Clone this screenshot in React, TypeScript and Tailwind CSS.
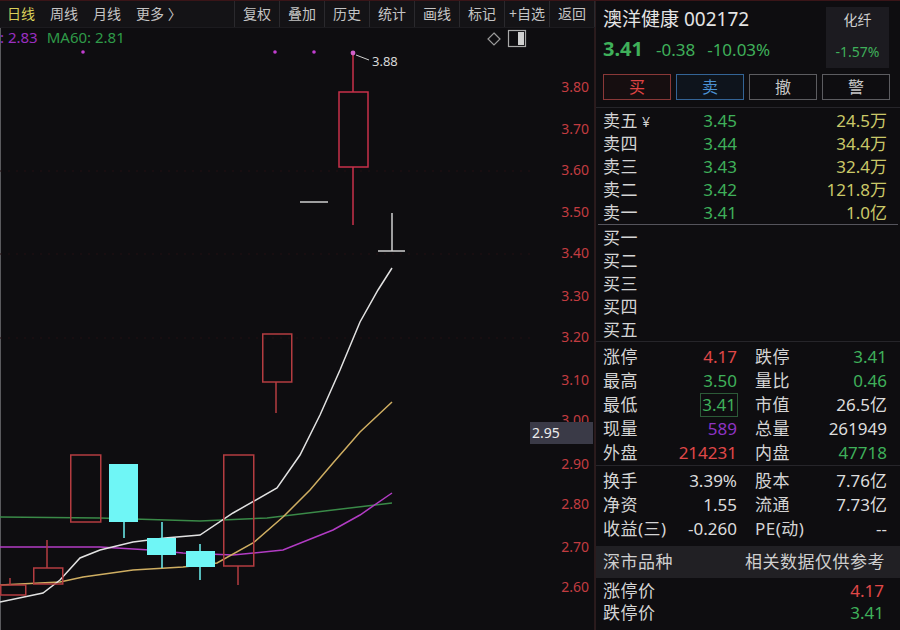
import React from 'react';

const FONT = "font-['Noto_Sans','Noto_Sans_CJK_SC',sans-serif]";

const RED = 'text-[#e04848]';
const GREEN = 'text-[#3fb05a]';
const WHITE = 'text-[#dcdcdc]';
const PURPLE = 'text-[#8e34c4]';

const leftTabs = [
  { t: '日线', c: 'text-[#d8cf5a]' },
  { t: '周线', c: 'text-[#c4c4c4]' },
  { t: '月线', c: 'text-[#c4c4c4]' },
  { t: '更多 〉', c: 'text-[#c4c4c4]' },
];

const rightTabs = ['复权', '叠加', '历史', '统计', '画线', '标记', '+自选', '返回'];

const sells = [
  ['卖五', '3.45', '24.5万'],
  ['卖四', '3.44', '34.4万'],
  ['卖三', '3.43', '32.4万'],
  ['卖二', '3.42', '121.8万'],
  ['卖一', '3.41', '1.0亿'],
];

const buys = ['买一', '买二', '买三', '买四', '买五'];

type StatRow = [string, string, string, string, string, string];

const stats1: StatRow[] = [
  ['涨停', '4.17', RED, '跌停', '3.41', GREEN],
  ['最高', '3.50', GREEN, '量比', '0.46', GREEN],
  ['最低', '3.41', GREEN, '市值', '26.5亿', WHITE],
  ['现量', '589', PURPLE, '总量', '261949', WHITE],
  ['外盘', '214231', RED, '内盘', '47718', GREEN],
];

const stats2: StatRow[] = [
  ['换手', '3.39%', WHITE, '股本', '7.76亿', WHITE],
  ['净资', '1.55', WHITE, '流通', '7.73亿', WHITE],
  ['收益(三)', '-0.260', WHITE, 'PE(动)', '--', WHITE],
];

// candles in page coordinates
const hollow = [
  { x: 0, y: 585, w: 25, h: 10, wick: [10, 578, 585] },
  { x: 33, y: 568, w: 29, h: 16, wick: [47, 540, 568] },
  { x: 70, y: 455, w: 30, h: 67, wick: null },
  { x: 223, y: 455, w: 30, h: 111, wick: [238, 566, 585] },
  { x: 262, y: 334, w: 29, h: 48, wick: [276, 382, 413] },
];

const cyan = [
  { x: 109, y: 464, w: 29, h: 58, wicks: [[124, 522, 538]] },
  { x: 147, y: 538, w: 29, h: 17, wicks: [[162, 522, 538], [162, 555, 568]] },
  { x: 186, y: 551, w: 29, h: 16, wicks: [[200, 544, 551], [200, 567, 580]] },
];

const ma5 = '0,602 43,593 60,580 80,558 100,550 133,542 165,538 200,535 233,513 277,488 300,455 320,415 340,370 360,322 378,290 392,268';
const ma10 = '0,585 60,582 83,577 133,570 183,567 217,563 253,543 283,517 310,490 333,463 360,432 392,402';
const ma20 = '0,547 100,547 150,550 183,553 233,555 283,550 333,530 360,515 392,493';
const ma60 = '0,517 100,518 200,521 267,518 333,510 392,503';

const axis = [
  ['3.80', 88], ['3.70', 130], ['3.60', 171], ['3.50', 213], ['3.40', 254], ['3.30', 297],
  ['3.20', 338], ['3.10', 381], ['3.00', 421], ['2.90', 465], ['2.80', 505], ['2.70', 548], ['2.60', 588],
] as const;

const Chart = () => (
  <svg className="absolute inset-0" width={595} height={602} viewBox="0 28 595 602">
    <line x1={0.5} y1={28} x2={0.5} y2={630} stroke="#5a5a5e" strokeWidth={1} />
    <line x1={594.5} y1={28} x2={594.5} y2={630} stroke="#2a1a1c" strokeWidth={1} />
    {[171, 254, 338].map((y) => (
      <line key={y} x1={0} y1={y} x2={530} y2={y} stroke="#221113" strokeDasharray="2 6" />
    ))}

    {/* moving averages */}
    <polyline points={ma60} fill="none" stroke="#3a8a48" strokeWidth={1.5} />
    <polyline points={ma20} fill="none" stroke="#b23cc4" strokeWidth={1.5} />
    <polyline points={ma10} fill="none" stroke="#cfae62" strokeWidth={1.5} />
    <polyline points={ma5} fill="none" stroke="#e2e2e2" strokeWidth={1.5} />

    {hollow.map((c, i) => (
      <g key={i} stroke="#b43c40" strokeWidth={1.5} fill="none">
        <rect x={c.x + 0.75} y={c.y} width={c.w} height={c.h} />
        {c.wick && <line x1={c.wick[0]} y1={c.wick[1]} x2={c.wick[0]} y2={c.wick[2]} />}
      </g>
    ))}
    {cyan.map((c, i) => (
      <g key={i}>
        {c.wicks.map((w, j) => (
          <line key={j} x1={w[0]} y1={w[1]} x2={w[0]} y2={w[2]} stroke="#6ef2f2" strokeWidth={1.5} />
        ))}
        <rect x={c.x} y={c.y} width={c.w} height={c.h} fill="#6ff6f6" />
      </g>
    ))}

    {/* limit-down day */}
    <g stroke="#c8304a" strokeWidth={1.5} fill="none">
      <line x1={353} y1={52} x2={353} y2={92} />
      <rect x={339} y={92} width={29} height={75} />
      <line x1={353} y1={167} x2={353} y2={225} />
    </g>
    <line x1={300} y1={202} x2={328} y2={202} stroke="#cfcfcf" strokeWidth={1.5} />
    <g stroke="#cfcfcf" strokeWidth={1.5}>
      <line x1={392} y1={213} x2={392} y2={251} />
      <line x1={378} y1={251} x2={405} y2={251} />
    </g>

    {[83, 275, 314].map((x) => (
      <circle key={x} cx={x} cy={52} r={1.8} fill="#c23ed0" />
    ))}
    <circle cx={353} cy={53} r={2.4} fill="#d060c8" />
    <line x1={356} y1={55} x2={369} y2={60} stroke="#cfcfcf" strokeWidth={1} />
    <text x={372} y={63} fontSize={13} fill="#d8d8d8" dominantBaseline="middle">3.88</text>

    {/* top right icons */}
    <path d="M494 33 L500 39 L494 45 L488 39 Z" fill="none" stroke="#9a9a9a" strokeWidth={1.2} />
    <rect x={508.5} y={30.5} width={17} height={16} fill="none" stroke="#a8a8a8" strokeWidth={1.2} />
    <rect x={518} y={32} width={6} height={13} fill="#d0d0d0" />

    {axis.map(([t, y]) => (
      <text key={t} x={589} y={y} fontSize={14} fill="#c23c40" textAnchor="end" dominantBaseline="middle">
        {t}
      </text>
    ))}
    <rect x={530} y={422} width={63} height={22} fill="#3a3a47" />
    <text x={532} y={434} fontSize={14} fill="#ececec" dominantBaseline="middle">2.95</text>
  </svg>
);

const StatRows = ({ rows }: { rows: StatRow[] }) => (
  <div className="flex flex-col">
    {rows.map((r) => (
      <div key={r[0]} className="h-[24px] flex items-center text-[17px] leading-[24px]">
        <div className="w-[134px] flex justify-between">
          <span className="text-[#d4d4d4] tracking-[0.5px]">{r[0]}</span>
          {r[0] === '最低' ? (
            <span className={`${r[2]} border border-[#2c5a38] px-[1px] leading-[21px] -mr-[1px]`}>{r[1]}</span>
          ) : (
            <span className={r[2]}>{r[1]}</span>
          )}
        </div>
        <div className="w-[132px] ml-[18px] flex justify-between">
          <span className="text-[#d4d4d4] tracking-[0.5px]">{r[3]}</span>
          <span className={r[5]}>{r[4]}</span>
        </div>
      </div>
    ))}
  </div>
);

export default function App() {
  return (
    <div className={`w-[900px] h-[630px] flex bg-[#0e0d10] border-t border-[#3a1518] overflow-hidden ${FONT}`}>
      {/* left: toolbar + chart */}
      <div className="w-[595px] flex flex-col">
        <div className="h-[27px] flex bg-[#141316] border-b border-[#1c1b1f] text-[14px] leading-[26px]">
          <div className="w-[235px] flex gap-[15px] pl-[7px] border-r border-[#2a292d]">
            {leftTabs.map((t) => (
              <span key={t.t} className={t.c}>{t.t}</span>
            ))}
          </div>
          {rightTabs.map((t) => (
            <div key={t} className="flex-1 text-center text-[#c4c4c4] border-r border-[#2a292d]">
              {t}
            </div>
          ))}
        </div>
        <div className="relative flex-1">
          <Chart />
          <div className="relative flex gap-[9px] text-[15px] leading-[18px]">
            <span className="text-[#9a2fc0]">: 2.83</span>
            <span className="text-[#2f9a48]">MA60: 2.81</span>
          </div>
        </div>
      </div>

      {/* right: quote panel */}
      <div className="flex-1 flex flex-col border-l border-[#2a1c1e]">
        <div className="h-[67px] flex pl-[7px] pr-[11px] pt-[6px]">
          <div className="flex-1">
            <div className="text-[19px] leading-[24px] text-[#e4e4e4]">澳洋健康 002172</div>
            <div className="flex items-baseline mt-[6px] leading-[24px] text-[#3fb05a]">
              <span className="text-[20px] font-bold">3.41</span>
              <span className="text-[17px] ml-[13px]">-0.38</span>
              <span className="text-[17px] ml-[12px]">-10.03%</span>
            </div>
          </div>
          <div className="w-[63px] h-[61px] bg-[#1c1b20] flex flex-col items-center pt-[4px]">
            <span className="text-[14px] leading-[18px] text-[#d0d0d0]">化纤</span>
            <span className="text-[14px] leading-[18px] mt-[14px] text-[#3fb05a]">-1.57%</span>
          </div>
        </div>
        <div className="h-[26px] mt-[6px] flex gap-[5px] pl-[7px] text-[16px] leading-[24px]">
          <div className="w-[68px] text-center border border-[#8a3838] bg-[#160e10] text-[#e04444]">买</div>
          <div className="w-[68px] text-center border border-[#336496] bg-[#0e141c] text-[#4c92d2]">卖</div>
          <div className="w-[68px] text-center border border-[#5c5c60] text-[#c8c8c8]">撤</div>
          <div className="w-[68px] text-center border border-[#5c5c60] text-[#c8c8c8]">警</div>
        </div>
        <div className="h-[8px] border-b border-[#26252a]" />

        <div className="pt-[1px] pl-[7px] pr-[13px]">
          {sells.map(([l, p, v]) => (
            <div key={l} className="h-[23px] flex items-center text-[17px] leading-[23px]">
              <span className="w-[80px] text-[#d4d4d4] tracking-[0.5px]">
                {l}
                {l === '卖五' && <span className="ml-[4px] text-[14px]">¥</span>}
              </span>
              <span className={`w-[54px] text-right ${GREEN}`}>{p}</span>
              <span className="flex-1 text-right text-[#cac868]">{v}</span>
            </div>
          ))}
        </div>
        <div className="h-px bg-[#55545c] mx-[2px]" />
        <div className="pt-[1px] pl-[7px] pr-[13px] border-b border-[#26252a]">
          {buys.map((l) => (
            <div key={l} className="h-[23px] flex items-center text-[17px] leading-[23px] text-[#d4d4d4] tracking-[0.5px]">
              {l}
            </div>
          ))}
        </div>

        <div className="pt-[3px] pl-[7px] pr-[13px] border-b border-[#26252a]">
          <StatRows rows={stats1} />
        </div>
        <div className="pt-[3px] pl-[7px] pr-[13px]">
          <StatRows rows={stats2} />
        </div>

        <div className="h-[32px] mt-[5px] bg-[#212024] flex items-center justify-between pl-[7px] pr-[15px] text-[17px] text-[#cfcfcf] tracking-[0.5px]">
          <span>深市品种</span>
          <span>相关数据仅供参考</span>
        </div>
        <div className="pt-[2px] pl-[7px] pr-[16px]">
          <div className="h-[22px] flex justify-between items-center text-[17px] leading-[22px]">
            <span className="text-[#d4d4d4] tracking-[0.5px]">涨停价</span>
            <span className={RED}>4.17</span>
          </div>
          <div className="h-[22px] flex justify-between items-center text-[17px] leading-[22px]">
            <span className="text-[#d4d4d4] tracking-[0.5px]">跌停价</span>
            <span className={GREEN}>3.41</span>
          </div>
        </div>
      </div>
    </div>
  );
}
